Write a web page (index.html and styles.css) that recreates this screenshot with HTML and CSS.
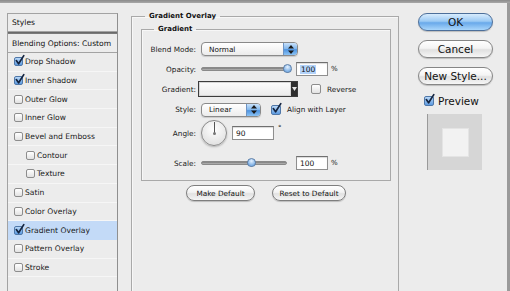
FILE: index.html
```html
<!DOCTYPE html>
<html>
<head>
<meta charset="utf-8">
<link rel="stylesheet" href="styles.css">
</head>
<body>
<div class="topbar"></div>
<div class="main">
  <aside class="styles-panel">
    <div class="panel-head">Styles</div>
    <div class="panel-blend">Blending Options: Custom</div>
    <ul class="fx-list">
      <li class="fx"><span class="cb on"><svg viewBox="0 0 11 11" width="11" height="11"><path d="M2.3 5.6 L4.6 8.8 L9.8 0.6" /></svg></span>Drop Shadow</li>
      <li class="fx"><span class="cb on"><svg viewBox="0 0 11 11" width="11" height="11"><path d="M2.3 5.6 L4.6 8.8 L9.8 0.6" /></svg></span>Inner Shadow</li>
      <li class="fx"><span class="cb"></span>Outer Glow</li>
      <li class="fx"><span class="cb"></span>Inner Glow</li>
      <li class="fx"><span class="cb"></span>Bevel and Emboss</li>
      <li class="fx sub"><span class="cb"></span>Contour</li>
      <li class="fx sub"><span class="cb"></span>Texture</li>
      <li class="fx"><span class="cb"></span>Satin</li>
      <li class="fx"><span class="cb"></span>Color Overlay</li>
      <li class="fx active"><span class="cb on"><svg viewBox="0 0 11 11" width="11" height="11"><path d="M2.3 5.6 L4.6 8.8 L9.8 0.6" /></svg></span>Gradient Overlay</li>
      <li class="fx"><span class="cb"></span>Pattern Overlay</li>
      <li class="fx"><span class="cb"></span>Stroke</li>
      <li class="fx"></li>
    </ul>
  </aside>

  <section class="center">
    <fieldset class="group outer">
      <legend>Gradient Overlay</legend>
      <fieldset class="group inner">
        <legend>Gradient</legend>
        <div class="form">
          <div class="row r1">
            <label>Blend Mode:</label>
            <div class="popup wide"><span>Normal</span><span class="stepper"><svg viewBox="0 0 6 9" width="6" height="9"><path d="M3 0 L6 3.5 L0 3.5 Z M3 9 L6 5.5 L0 5.5 Z"/></svg></span></div>
          </div>
          <div class="row r2">
            <label>Opacity:</label>
            <div class="slider"><span class="track"></span><span class="thumb" style="left:82px"></span></div>
            <div class="field num"><span class="sel">100</span></div>
            <span class="unit">%</span>
          </div>
          <div class="row r3">
            <label>Gradient:</label>
            <div class="gradient-box"><span class="gfill"></span><span class="garrow"><svg viewBox="0 0 5 4" width="5" height="4"><path d="M0 0 L5 0 L2.5 4 Z"/></svg></span></div>
            <span class="cb rev"></span><span class="opt">Reverse</span>
          </div>
          <div class="row r4">
            <label>Style:</label>
            <div class="popup narrow"><span>Linear</span><span class="stepper"><svg viewBox="0 0 6 9" width="6" height="9"><path d="M3 0 L6 3.5 L0 3.5 Z M3 9 L6 5.5 L0 5.5 Z"/></svg></span></div>
            <span class="cb on align"><svg viewBox="0 0 11 11" width="11" height="11"><path d="M2.3 5.6 L4.6 8.8 L9.8 0.6" /></svg></span><span class="opt">Align with Layer</span>
          </div>
          <div class="row r5">
            <label>Angle:</label>
            <div class="dial"><span class="hand"></span><span class="pivot"></span></div>
            <div class="field angle">90</div>
            <span class="deg">°</span>
          </div>
          <div class="row r6">
            <label>Scale:</label>
            <div class="slider"><span class="track short"></span><span class="thumb" style="left:46px"></span></div>
            <div class="field num">100</div>
            <span class="unit">%</span>
          </div>
        </div>
      </fieldset>
      <div class="defaults">
        <button class="pill make">Make Default</button>
        <button class="pill reset">Reset to Default</button>
      </div>
    </fieldset>
  </section>

  <aside class="actions">
    <button class="btn default">OK</button>
    <button class="btn">Cancel</button>
    <button class="btn">New Style...</button>
    <div class="preview-row"><span class="cb on big"><svg viewBox="0 0 11 11" width="11" height="11"><path d="M2.3 5.6 L4.6 8.8 L9.8 0.6" /></svg></span><span>Preview</span></div>
    <div class="preview-box"><div class="preview-inner"></div></div>
  </aside>
</div>
</body>
</html>
```
FILE: styles.css
```css
* { box-sizing: border-box; }
html, body { margin: 0; padding: 0; }
body {
  width: 510px;
  height: 291px;
  overflow: hidden;
  background: #ececec;
  font-family: "DejaVu Sans", "Liberation Sans", sans-serif;
  color: #111;
}
.topbar {
  height: 3px;
  background: linear-gradient(#8a8a8a, #a8a8a8);
}
.main {
  display: flex;
  align-items: flex-start;
  height: 288px;
  overflow: hidden;
  border-right: 3px solid #9a9a9a;
}

/* ---------- left styles list ---------- */
.styles-panel {
  margin: 10px 0 0 7px;
  width: 111px;
  height: 300px;
  flex: none;
  border: 1px solid #a3a3a3;
  border-right-color: #8f8f8f;
  background: #ececec;
  font-size: 7.6px;
}
.panel-head {
  height: 18px;
  display: flex;
  align-items: center;
  padding-left: 4px;
  border-bottom: 1px solid #a3a3a3;
  box-shadow: 0 1px 0 #6a6a6a, 0 2px 0 #7a7a7a;
}
.panel-blend {
  height: 19px;
  margin-top: 2px;
  display: flex;
  align-items: center;
  padding-left: 4px;
  border-bottom: 1px solid #a3a3a3;
}
.fx-list {
  list-style: none;
  margin: 0;
  padding: 0;
}
.fx {
  height: 18.7px;
  display: flex;
  align-items: center;
  padding-left: 6px;
  border-bottom: 1px solid #f6f6f6;
  color: #1a1a1a;
}
.fx.sub { padding-left: 18px; }
.fx.active { background: #c3daf7; border-bottom-color: #c3daf7; }

.cb {
  flex: none;
  width: 9px;
  height: 9px;
  margin-right: 2px;
  border: 1px solid #8d8d8d;
  border-radius: 2px;
  background: linear-gradient(#ffffff, #e2e2e2);
  position: relative;
}
.cb.on {
  border-color: #4f77a8;
  background: linear-gradient(#b9d8f8, #5c9ae0);
}
.cb svg {
  position: absolute;
  left: -1px;
  top: -3px;
  overflow: visible;
}
.cb svg path {
  fill: none;
  stroke: #14243f;
  stroke-width: 1.7;
  stroke-linecap: round;
  stroke-linejoin: round;
}

/* ---------- center groups ---------- */
.center {
  margin: 8px 0 0 13px;
  width: 268px;
  flex: none;
}
.group {
  margin: 0;
  padding: 0;
  border: 1px solid #a9a9a9;
  box-shadow: inset 1px 1px 0 #f7f7f7;
  min-width: 0;
}
.group legend {
  font-size: 7px;
  font-weight: bold;
  line-height: 10px;
  padding: 0 4px;
  color: #111;
}
.outer {
  height: 300px;
  padding-top: 3px;
}
.outer > legend { margin-left: 13px; }
.inner {
  margin-left: 9px;
  width: 250px;
  padding: 5px 0 8px 0;
}
.inner > legend { margin-left: 12px; }

.form { display: flex; flex-direction: column; font-size: 7.3px; }
.row { display: flex; align-items: center; }
.row label {
  flex: none;
  width: 54px;
  text-align: right;
  margin-right: 5px;
  color: #1a1a1a;
}
.r1, .r2, .r3 { height: 20px; }
.r4 { height: 21px; }
.r5 { height: 26px; align-items: flex-start; }
.r5 label { margin-top: 9px; }
.r6 { height: 18px; margin-top: 8px; }

.popup {
  display: flex;
  align-items: center;
  height: 14px;
  border: 1px solid #8a8a8a;
  border-radius: 4px;
  background: linear-gradient(#ffffff, #ececec);
  padding-left: 7px;
  overflow: hidden;
  box-shadow: 0 1px 1px rgba(0,0,0,0.15);
}
.popup.wide { width: 97px; }
.popup.narrow { width: 60px; }
.stepper {
  margin-left: auto;
  width: 14px;
  height: 100%;
  display: flex;
  align-items: center;
  justify-content: center;
  background: linear-gradient(#c9e2fb, #7fb5ec 50%, #4d93e0 55%, #8cc3f4);
  border-left: 1px solid #6d93c4;
}
.stepper svg path { fill: #1a1a1a; }

.slider {
  position: relative;
  width: 93px;
  height: 12px;
  flex: none;
}
.track {
  position: absolute;
  left: 0;
  top: 4px;
  width: 86px;
  height: 4px;
  border-radius: 2px;
  background: linear-gradient(#7a7a7a, #b9b9b9);
  border: 1px solid #8a8a8a;
}
.thumb {
  position: absolute;
  top: 1px;
  width: 9px;
  height: 9px;
  border-radius: 50% 50% 45% 45%;
  border: 1px solid #5b7ea8;
  background: radial-gradient(circle at 50% 30%, #e6f2ff, #7fb1e6 70%);
}
.field {
  height: 14px;
  border: 1px solid #8f8f8f;
  border-top-color: #6f6f6f;
  background: #fff;
  box-shadow: inset 0 1px 1px rgba(0,0,0,0.15);
  display: flex;
  align-items: center;
  padding-left: 3px;
  font-size: 7.5px;
}
.num { width: 32px; margin-left: 2px; }
.sel { background: #b3d3fa; padding: 0 1px; }
.unit { margin-left: 3px; font-size: 7px; }

.gradient-box {
  display: flex;
  width: 100px;
  height: 16px;
  margin-left: -3px;
  border: 1px solid #3c3c3c;
  background: #fff;
}
.gfill {
  flex: 1;
  background: linear-gradient(#fbfbfb, #ececec);
  border: 1px solid #d6d6d6;
}
.garrow {
  width: 6px;
  background: #2e2e2e;
  display: flex;
  align-items: center;
  justify-content: center;
}
.garrow svg path { fill: #e6e6e6; }
.cb.rev { margin-left: 13px; margin-right: 6px; width: 10px; height: 10px; }
.cb.align { margin-left: 10px; margin-right: 6px; width: 10px; height: 10px; }
.opt { color: #1a1a1a; }

.dial {
  position: relative;
  width: 26px;
  height: 26px;
  border-radius: 50%;
  border: 1px solid #8a8a8a;
  background: radial-gradient(circle at 50% 35%, #ffffff, #e3e3e3 75%);
  box-shadow: 0 1px 2px rgba(0,0,0,0.25);
  flex: none;
}
.hand {
  position: absolute;
  left: 12px;
  top: 1px;
  width: 1px;
  height: 11px;
  background: #555;
}
.pivot {
  position: absolute;
  left: 11px;
  top: 11px;
  width: 3px;
  height: 3px;
  border-radius: 50%;
  background: #777;
}
.angle { width: 42px; margin-left: 5px; margin-top: 6px; }
.deg { margin-left: 4px; margin-top: 4px; font-size: 7px; }

.defaults {
  display: flex;
  justify-content: center;
  gap: 17px;
  margin-top: 4px;
  padding-left: 2px;
}
.pill {
  height: 16px;
  border-radius: 8px;
  border: 1px solid #7e7e7e;
  background: linear-gradient(#ffffff, #f3f3f3 45%, #e2e2e2 55%, #f5f5f5);
  box-shadow: 0 1px 1px rgba(0,0,0,0.2);
  font-family: "DejaVu Sans", sans-serif;
  font-size: 7.3px;
  color: #111;
  padding: 0;
}
.make { width: 69px; }
.reset { width: 74px; }

/* ---------- right column ---------- */
.actions {
  margin: 10px 0 0 19px;
  width: 75px;
  flex: none;
  display: flex;
  flex-direction: column;
}
.btn {
  height: 18px;
  width: 75px;
  margin-bottom: 9px;
  border-radius: 9px;
  border: 1px solid #868686;
  background: linear-gradient(#ffffff, #f4f4f4 45%, #e0e0e0 55%, #f6f6f6);
  box-shadow: 0 1px 1px rgba(0,0,0,0.2);
  font-family: "DejaVu Sans", sans-serif;
  font-size: 10.5px;
  color: #111;
  padding: 0;
}
.btn.default {
  border-color: #4d6f9a;
  background: linear-gradient(#d8ecfd, #9ccaf4 45%, #69a9ea 55%, #a9d6fb);
}
.preview-row {
  display: flex;
  align-items: center;
  height: 11px;
  margin: 1px 0 0 6px;
  font-size: 10.5px;
}
.cb.big { width: 10px; height: 10px; margin-right: 4px; }
.preview-box {
  margin: 8px 0 0 9px;
  width: 55px;
  height: 56px;
  background: #d6d6d6;
  border-left: 1px solid #9a9a9a;
  display: flex;
  align-items: center;
  justify-content: center;
}
.preview-inner {
  width: 27px;
  height: 29px;
  background: #f2f2f2;
  border: 1px solid #e4e4e4;
}
```
